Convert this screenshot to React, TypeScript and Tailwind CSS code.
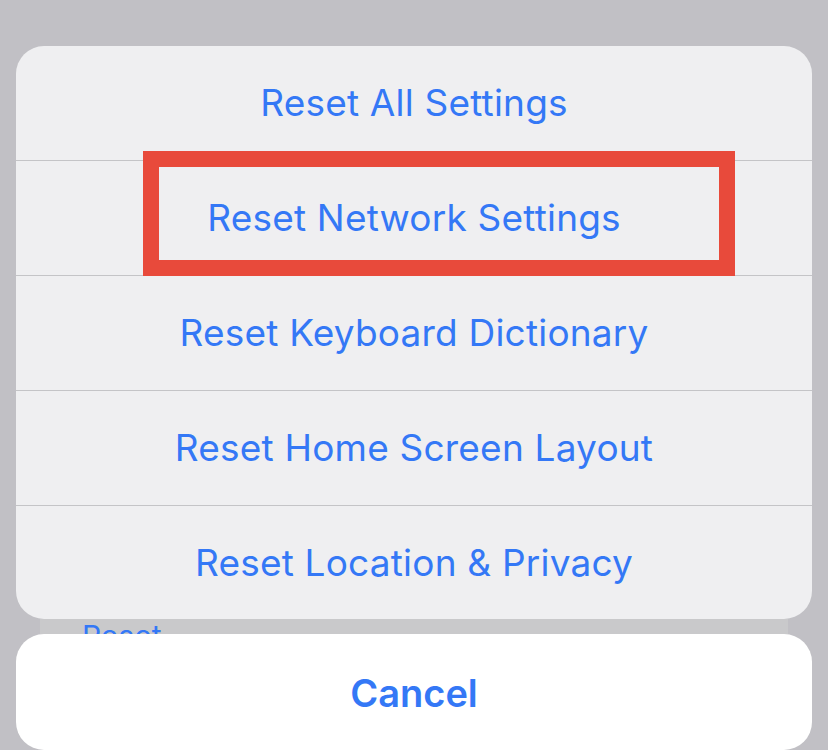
import React from 'react';

const options = [
  { label: 'Reset All Settings', h: 'h-[114px]' },
  { label: 'Reset Network Settings', h: 'h-[115px]' },
  { label: 'Reset Keyboard Dictionary', h: 'h-[115px]' },
  { label: 'Reset Home Screen Layout', h: 'h-[115px]' },
  { label: 'Reset Location & Privacy', h: 'h-[114px]' },
];

const App: React.FC = () => {
  return (
    <div
      className="w-[828px] h-[750px] overflow-hidden bg-[#c1c0c5] flex flex-col pt-[46px] px-[16px]"
      style={{ fontFamily: 'Inter, "Liberation Sans", sans-serif' }}
    >
      {/* Action sheet */}
      <div className="relative z-10 bg-[#efeff1] rounded-[28px] flex flex-col">
        {options.map((o, i) => (
          <div
            key={o.label}
            className={`${o.h} flex items-center justify-center text-[37px] text-[#3478f6] tracking-[0.2px] ${
              i > 0 ? 'border-t border-[#c4c4c7]' : ''
            }`}
          >
            {o.label}
          </div>
        ))}
        {/* Annotation box */}
        <div className="absolute left-[127px] top-[105px] w-[592px] h-[125px] border-[16px] border-[#e84a3b]" />
      </div>

      {/* Dimmed list behind */}
      <div className="relative mx-[24px] h-[18px] bg-[#c9c9cb] overflow-hidden">
        <span className="absolute left-[42px] top-[2px] text-[30px] leading-none text-[#3478f6]">Reset</span>
      </div>

      {/* Cancel */}
      <div className="bg-white rounded-[28px] h-[130px] flex items-start justify-center pt-[31px]">
        <span className="text-[38px] font-semibold text-[#3478f6]">Cancel</span>
      </div>
    </div>
  );
};

export default App;
